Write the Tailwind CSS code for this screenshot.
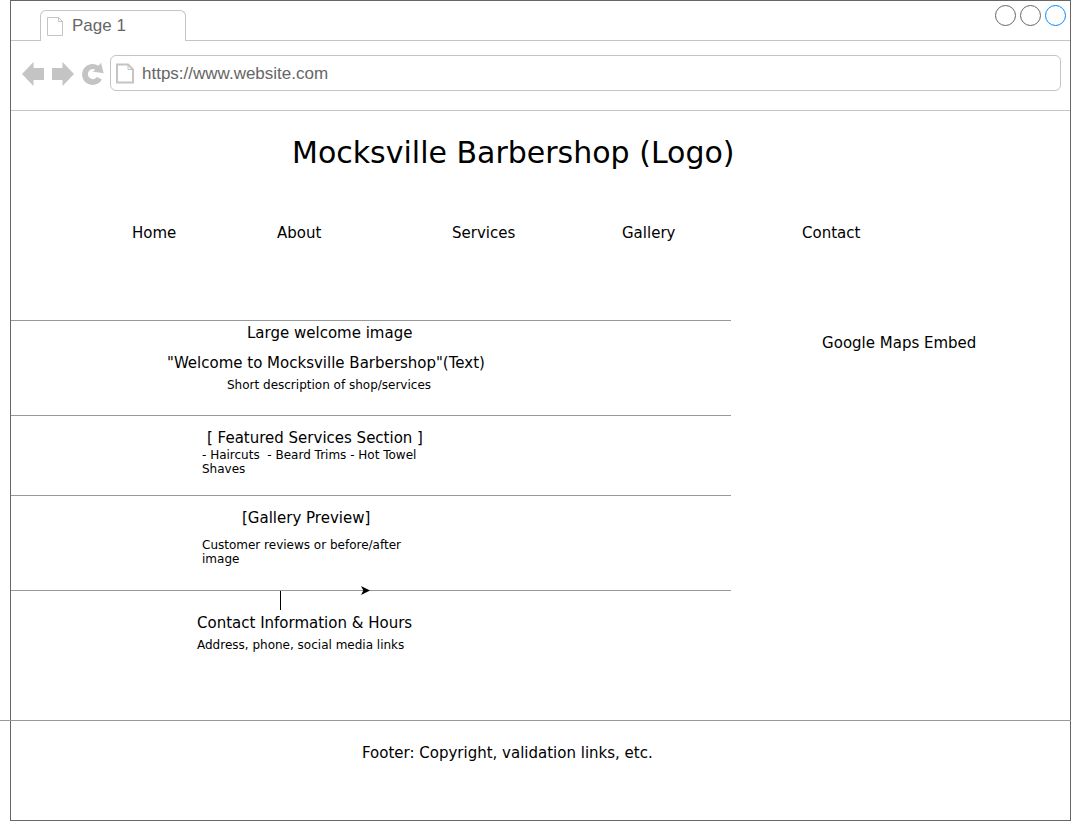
<!DOCTYPE html>
<html lang="en">
<head>
<meta charset="utf-8">
<meta name="viewport" content="width=device-width, initial-scale=1">
<title>Mocksville Barbershop</title>
<script src="https://cdn.jsdelivr.net/npm/@tailwindcss/browser@4"></script>
</head>
<body class="bg-white font-['Verdana','DejaVu_Sans',sans-serif] text-[15px] leading-5 text-black">
<div class="ml-[10px] flex min-h-screen flex-col border border-[#666666]">

  <!-- Tab strip -->
  <header>
    <div class="flex h-10 items-end justify-between border-b border-[#c4c4c4] pl-[29px] font-['Helvetica','Liberation_Sans',sans-serif]">
      <div class="-mb-px flex h-[31px] w-[146px] items-center gap-2 rounded-t-md border border-b-0 border-[#c4c4c4] bg-white pl-[6px] text-[17px] text-[#666666]">
        <svg class="h-5 w-[17px]" viewBox="0 0 17 20" fill="none" stroke="#c4c4c4" aria-hidden="true"><path d="M.5 1.500H11.500L15.500 5.500V19.500H.5ZM11.500 1.500V5.500H15.500"/></svg>
        <span>Page 1</span>
      </div>
      <div class="flex gap-1 self-start pt-[4px] pr-1">
        <button type="button" aria-label="Minimize" class="size-[21px] rounded-full border border-[#666666]"></button>
        <button type="button" aria-label="Maximize" class="size-[21px] rounded-full border border-[#666666]"></button>
        <button type="button" aria-label="Close" class="size-[21px] rounded-full border border-[#008cff]"></button>
      </div>
    </div>

    <!-- Address bar -->
    <div class="flex h-[70px] items-start border-b border-[#c4c4c4] pt-[14px] pr-[9px] pl-[11px] font-['Helvetica','Liberation_Sans',sans-serif]">
      <div class="flex h-9 w-[88px] shrink-0 items-center gap-[6px] pt-[2px] text-[#c4c4c4]">
        <button type="button" aria-label="Back"><svg class="h-6 w-[23px]" viewBox="0 0 23 24" fill="currentColor"><path d="M0 12 11.500 0V6H22V18H11.500V24Z"/></svg></button>
        <button type="button" aria-label="Forward"><svg class="h-6 w-[23px]" viewBox="0 0 23 24" fill="currentColor"><path d="M23 12 11.500 0V6H1V18H11.500V24Z"/></svg></button>
        <button type="button" aria-label="Reload"><svg class="h-6 w-[24px]" viewBox="0 0 24 24" fill="currentColor"><path d="M18.500 3.800 21 .8 23.700 11.200 12.500 9.500 15.400 7.800A5 5 0 1 0 17 15L21.800 17.500A10.500 10.500 0 1 1 18.500 3.800Z"/></svg></button>
      </div>
      <label class="flex h-9 grow items-center gap-2 rounded-md border border-[#c4c4c4] pl-[5px]">
        <svg class="h-[21px] w-[18px] shrink-0" viewBox="0 0 18 21" fill="none" stroke="#c4c4c4" aria-hidden="true"><path stroke-width="2" d="M1 1.500H12L17 6.500V19.500H1Z"/><path d="M12 1.500V6.500H17"/></svg>
        <input type="text" aria-label="Address" value="https://www.website.com" class="w-full pt-[2px] text-[17px] text-[#666666] outline-none">
      </label>
    </div>
  </header>

  <h1 class="mt-[22px] pl-[281px] text-[30px] leading-10">Mocksville Barbershop (Logo)</h1>

  <nav class="mt-[50px] grid grid-cols-[145px_175px_170px_180px_1fr] pl-[121px]">
    <a href="#">Home</a>
    <a href="#">About</a>
    <a href="#">Services</a>
    <a href="#">Gallery</a>
    <a href="#">Contact</a>
  </nav>

  <div class="mt-[77px] grid grid-cols-[68fr_32fr]">
    <main>
      <section class="h-[95px] border-t border-[#999999] pt-[2px]">
        <p class="pl-[236px]">Large welcome image</p>
        <h2 class="mt-[10px] pl-[156px]">"Welcome to Mocksville Barbershop"(Text)</h2>
        <p class="mt-[5px] pl-[216px] text-[12px] leading-[14px]">Short description of shop/services</p>
      </section>
      <section class="h-[80px] border-t border-[#999999] pt-3">
        <h2 class="pl-[196px]">[ Featured Services Section ]</h2>
        <p class="ml-[191px] w-[240px] text-[12px] leading-[14px]">- Haircuts&nbsp; - Beard Trims - Hot Towel Shaves</p>
      </section>
      <section class="h-[95px] border-t border-[#999999] pt-3">
        <h2 class="pl-[231px]">[Gallery Preview]</h2>
        <p class="mt-[10px] ml-[191px] w-[230px] text-[12px] leading-[14px]">Customer reviews or before/after image</p>
      </section>
      <section class="relative border-t border-[#999999] pt-[22px]">
        <!-- Connector stub and arrow head lying on the divider -->
        <svg class="absolute -top-[5px] left-[269px] h-[25px] w-[92px]" viewBox="0 0 92 25" aria-hidden="true"><path d="M.5 5V24" stroke="#000" fill="none"/><path d="M81 0 90 4.500 81 9 83.300 4.500Z"/></svg>
        <h2 class="pl-[186px]">Contact Information &amp; Hours</h2>
        <p class="mt-[5px] pl-[186px] text-[12px] leading-[14px]">Address, phone, social media links</p>
      </section>
    </main>
    <aside class="pt-[13px] pl-[91px]">Google Maps Embed</aside>
  </div>

  <footer class="mt-[68px] -mr-px -ml-[11px] border-t border-[#999999] pt-[22px] pl-[362px]">Footer: Copyright, validation links, etc.</footer>
</div>
</body>
</html>
